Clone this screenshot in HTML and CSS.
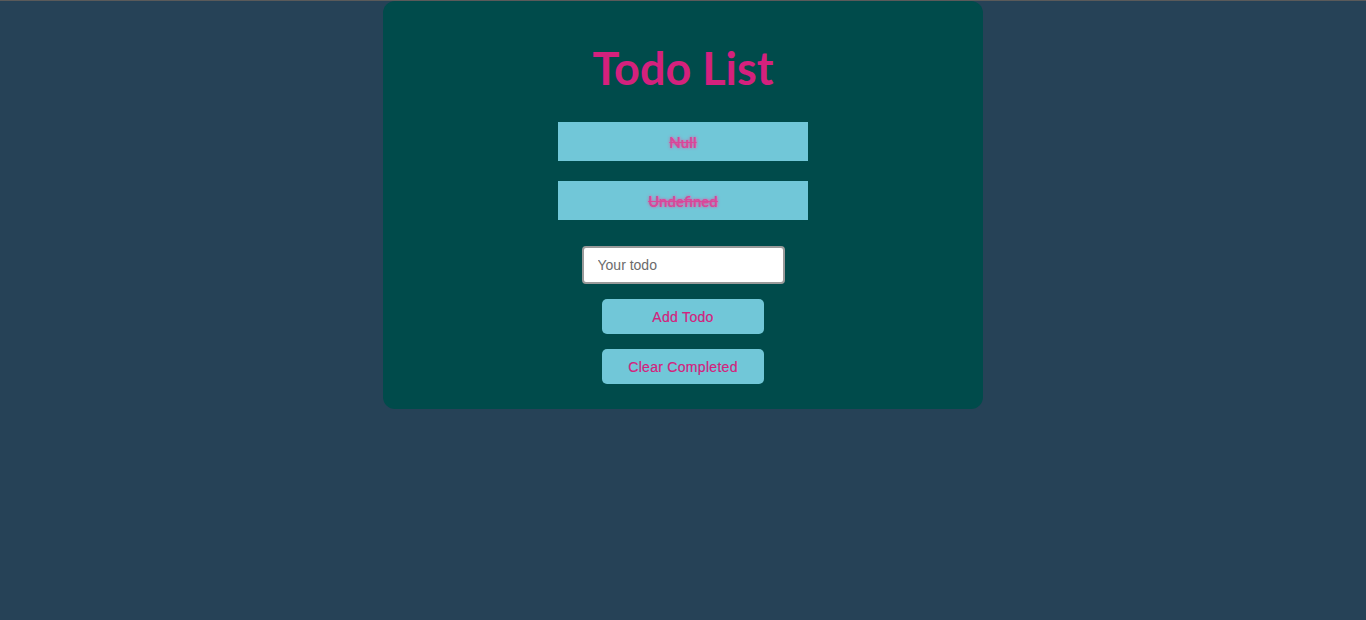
FILE: index.html
```html
<!DOCTYPE html>
<html>
<head>
<meta charset="utf-8">
<link rel="stylesheet" href="styles.css">
</head>
<body>
<div class="card">
  <h1 class="title">Todo List</h1>
  <ul class="list">
    <li class="item done">Null</li>
    <li class="item done">Undefined</li>
  </ul>
  <input class="todo-input" type="text" placeholder="Your todo">
  <button class="btn">Add Todo</button>
  <button class="btn">Clear Completed</button>
</div>
</body>
</html>
```
FILE: styles.css
```css
html, body {
  margin: 0;
  padding: 0;
}
body {
  background: #264257;
  border-top: 1px solid #5a5a5a;
  min-height: 619px;
}
.card {
  width: 600px;
  margin: 0 auto;
  background: #004b4b;
  border-radius: 12px;
  padding: 39px 0 25px;
  box-sizing: border-box;
  display: flex;
  flex-direction: column;
  align-items: center;
}
.title {
  margin: 0 0 26px;
  font-family: Lato, "Open Sans", sans-serif;
  font-weight: 700;
  font-size: 45px;
  line-height: 56px;
  color: #d4217d;
}
.list {
  list-style: none;
  margin: 0;
  padding: 0;
  display: flex;
  flex-direction: column;
  gap: 20px;
}
.item {
  width: 250px;
  height: 39px;
  background: #71c7d8;
  display: flex;
  align-items: center;
  justify-content: center;
  font-family: Lato, sans-serif;
  font-weight: 700;
  font-size: 15px;
  color: #d8479a;
  text-shadow: 0 0 3px #e0559f;
}
.item.done {
  text-decoration: line-through;
}
.todo-input {
  margin-top: 26px;
  width: 203px;
  height: 38px;
  box-sizing: border-box;
  border: 2px solid #9a9a9a;
  border-radius: 4px;
  background: #fff;
  padding: 0 14px;
  font-family: "Liberation Sans", Arial, sans-serif;
  font-size: 14px;
  color: #333;
  outline: none;
}
.todo-input::placeholder {
  color: #6b6b6b;
}
.btn {
  margin-top: 15px;
  width: 162px;
  height: 35px;
  border: none;
  border-radius: 5px;
  background: #71c7d8;
  color: #d4217d;
  font-family: "Liberation Sans", Arial, sans-serif;
  font-size: 14px;
  font-weight: 500;
  letter-spacing: 0.3px;
  -webkit-text-stroke: 0.2px #d4217d;
  cursor: pointer;
}
```
